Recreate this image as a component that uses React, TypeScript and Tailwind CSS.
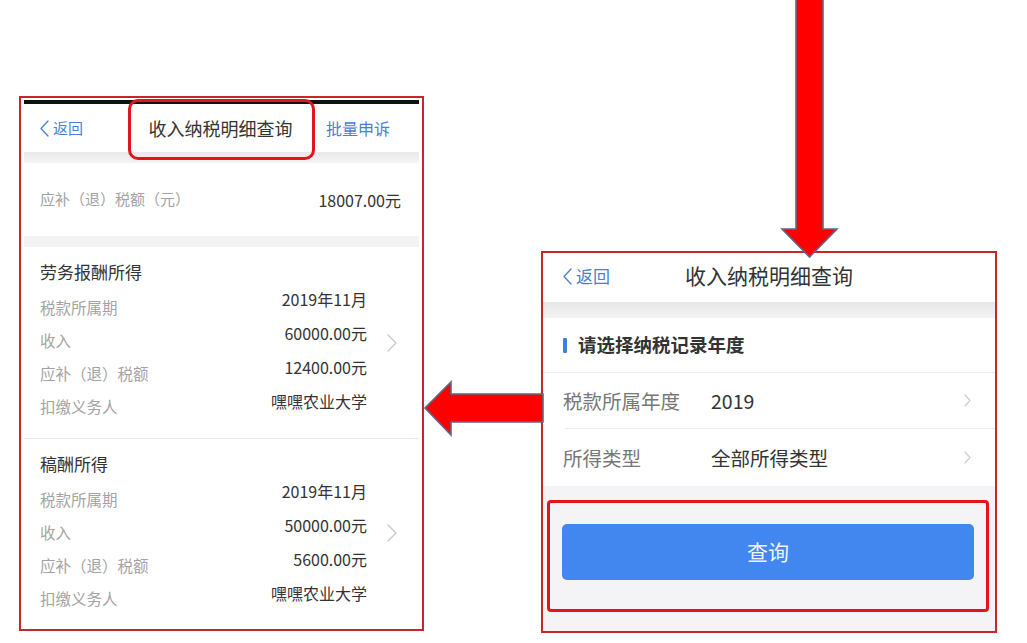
import React from 'react';

const Chevron: React.FC<{ className?: string; w?: number; h?: number }> = ({ className, w = 9, h = 16 }) => (
  <svg width={w} height={h} viewBox={`0 0 ${w} ${h}`} className={className} fill="none">
    <path d={`M1 1 L${w - 1} ${h / 2} L1 ${h - 1}`} stroke="currentColor" strokeWidth="1.3" strokeLinecap="round" strokeLinejoin="round" />
  </svg>
);

const BackLink: React.FC<{ size: string }> = ({ size }) => (
  <div className={`flex items-center gap-[4px] text-[#4a7fd2] ${size}`}>
    <Chevron className="rotate-180" w={9} h={17} />
    <span>返回</span>
  </div>
);

interface Record {
  title: string;
  period: string;
  income: string;
  tax: string;
  payer: string;
}

const records: Record[] = [
  { title: '劳务报酬所得', period: '2019年11月', income: '60000.00元', tax: '12400.00元', payer: '嘿嘿农业大学' },
  { title: '稿酬所得', period: '2019年11月', income: '50000.00元', tax: '5600.00元', payer: '嘿嘿农业大学' },
];

const RecordCard: React.FC<{ r: Record; height: string }> = ({ r, height }) => (
  <div className={`flex bg-white ${height}`}>
    <div className="flex-1 pl-[16px] pt-[13px]">
      <div className="h-[24px] leading-[24px] text-[17px] text-[#333]">{r.title}</div>
      <div className="mt-[3px] flex justify-between">
        <div className="flex flex-col pt-[4px] text-[15.5px] text-[#a3a3a3]">
          {['税款所属期', '收入', '应补（退）税额', '扣缴义务人'].map((l) => (
            <div key={l} className="h-[33px] leading-[33px]">{l}</div>
          ))}
        </div>
        <div className="flex flex-col items-end -mt-[5px] text-[16px] text-[#333]">
          {[r.period, r.income, r.tax, r.payer].map((v, i) => (
            <div key={i} className="h-[34px] leading-[34px]">{v}</div>
          ))}
        </div>
      </div>
    </div>
    <div className="w-[52px] flex items-center pl-[20px] text-[#c9c9c9]">
      <Chevron w={10} h={18} />
    </div>
  </div>
);

const LeftPanel: React.FC = () => (
  <div className="relative mt-[96px] w-[405px] h-[535px] border-2 border-[#c8262d] bg-white">
    <div className="mx-[3px] flex flex-col">
      <div className="mt-[2px] h-[4px] bg-[#111]" />
      <div className="relative h-[48px] flex items-center justify-between pl-[16px] pr-[29px] bg-white">
        <BackLink size="text-[15px]" />
        <div className="absolute inset-0 flex items-center justify-center pr-[2px] text-[18px] text-[#333]">收入纳税明细查询</div>
        <div className="text-[16px] text-[#4a7fd2]">批量申诉</div>
      </div>
      <div className="h-[11px] bg-gradient-to-b from-[#e9e9ea] to-[#f4f4f5]" />
      <div className="h-[73px] flex items-center justify-between pl-[16px] pr-[18px] bg-white">
        <span className="text-[15px] text-[#a3a3a3]">应补（退）税额（元）</span>
        <span className="text-[16px] text-[#333]">18007.00元</span>
      </div>
      <div className="h-[11px] bg-[#f3f3f4]" />
      <RecordCard r={records[0]} height="h-[191px]" />
      <div className="h-px bg-[#e8e8e8]" />
      <RecordCard r={records[1]} height="h-[187px]" />
    </div>
    <div className="absolute left-[107px] top-[1px] w-[187px] h-[61px] border-[3px] border-[#e3141c] rounded-[10px]" />
  </div>
);

const RightPanel: React.FC = () => (
  <div className="relative mt-[251px] ml-[117px] w-[456px] h-[382px] border-2 border-[#c8262d] bg-white flex flex-col">
    <div className="relative h-[49px] flex items-center pl-[20px] pb-[3px] bg-white">
      <BackLink size="text-[17px]" />
      <div className="absolute inset-0 flex items-center justify-center pb-[3px] text-[21px] text-[#333]">收入纳税明细查询</div>
    </div>
    <div className="h-[16px] bg-gradient-to-b from-[#e6e6e7] to-[#f4f4f5]" />
    <div className="bg-white flex flex-col">
      <div className="h-[54px] flex items-center pl-[20px] gap-[11px]">
        <div className="w-[4px] h-[15px] rounded-[1px] bg-[#3f7ee2]" />
        <span className="text-[18.5px] font-bold text-[#333]">请选择纳税记录年度</span>
      </div>
      <div className="h-px bg-[#ececec]" />
      <div className="h-[55px] flex items-center pl-[20px] pr-[24px]">
        <span className="w-[148px] text-[19.5px] text-[#777]">税款所属年度</span>
        <span className="flex-1 text-[19.5px] text-[#333]">2019</span>
        <Chevron className="text-[#cfcfcf]" w={7} h={13} />
      </div>
      <div className="ml-[22px] h-px bg-[#ececec]" />
      <div className="h-[57px] flex items-center pl-[20px] pr-[24px]">
        <span className="w-[148px] text-[19.5px] text-[#777]">所得类型</span>
        <span className="flex-1 text-[19.5px] text-[#333]">全部所得类型</span>
        <Chevron className="text-[#cfcfcf]" w={7} h={13} />
      </div>
    </div>
    <div className="flex-1 bg-[#f4f4f6] pt-[14px] pl-[4px]">
      <div className="w-[442px] h-[112px] border-[3px] border-[#e3141c] rounded-[4px] pt-[21px] pl-[12px]">
        <div className="w-[412px] h-[56px] rounded-[5px] bg-[#4286ef] flex items-center justify-center text-[21px] text-[#eef4ff]">
          查询
        </div>
      </div>
    </div>
  </div>
);

const Arrows: React.FC = () => (
  <svg className="absolute inset-0 pointer-events-none" width="1027" height="643" viewBox="0 0 1027 643">
    <polygon
      points="796,-3 823,-3 823,229 837,229 809.5,257 782,229 796,229"
      fill="#ff0000"
      stroke="#5d6886"
      strokeWidth="1.6"
      strokeLinejoin="miter"
    />
    <polygon
      points="543,394 451,394 451,382 425,408 451,435 451,422 543,422"
      fill="#ff0000"
      stroke="#5d6886"
      strokeWidth="1.6"
      strokeLinejoin="miter"
    />
  </svg>
);

export default function App() {
  return (
    <div className="relative w-[1027px] h-[643px] overflow-hidden bg-white font-['Noto_Sans_CJK_SC',sans-serif]">
      <div className="flex items-start pl-[19px]">
        <LeftPanel />
        <RightPanel />
      </div>
      <Arrows />
    </div>
  );
}
